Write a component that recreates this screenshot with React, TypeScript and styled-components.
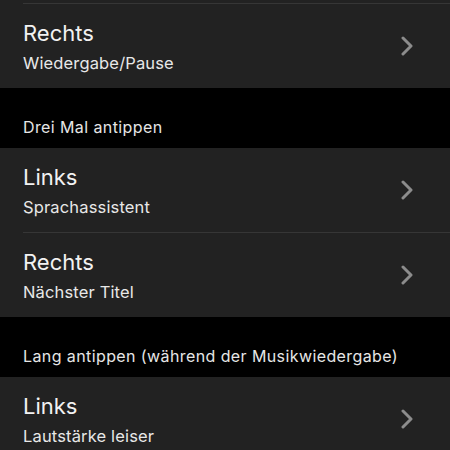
import React from "react";
import styled, { createGlobalStyle } from "styled-components";

const GlobalStyle = createGlobalStyle`
  html, body {
    margin: 0;
    padding: 0;
    background: #000;
  }
  body {
    font-family: Inter, "Noto Sans", "Liberation Sans", sans-serif;
    -webkit-font-smoothing: antialiased;
  }
`;

const Screen = styled.div`
  width: 450px;
  height: 450px;
  overflow: hidden;
  background: #000;
  display: flex;
  flex-direction: column;
`;

const SectionHeader = styled.div`
  height: 60px;
  flex-shrink: 0;
  box-sizing: border-box;
  display: flex;
  align-items: flex-end;
  padding: 0 0 11px 23px;
  font-size: 16px;
  line-height: 19px;
  color: #e6e6e6;
  letter-spacing: 0.4px;
`;

const Group = styled.div`
  background: #222222;
  display: flex;
  flex-direction: column;
  flex-shrink: 0;
`;

// bottom edge of the row scrolled out above the screen
const RowTail = styled.div`
  height: 3px;
`;

const Row = styled.div`
  height: 84px;
  box-sizing: border-box;
  display: flex;
  align-items: center;
  padding: 0 36px 0 23px;
`;

const Divider = styled.div`
  height: 1px;
  margin-left: 23px;
  background: #363636;
`;

const Texts = styled.div`
  flex: 1;
  display: flex;
  flex-direction: column;
  gap: 7px;
  align-self: flex-start;
  padding-top: 16px;
`;

const Title = styled.div`
  font-size: 22px;
  line-height: 26px;
  color: #f2f2f2;
`;

const Subtitle = styled.div`
  font-size: 16.5px;
  line-height: 20px;
  letter-spacing: 0.15px;
  color: #e8e8e8;
`;

const Chevron = () => (
  <svg width="14" height="20" viewBox="0 0 14 20" fill="none">
    <path d="M3 2 L11 10 L3 18" stroke="#8c8c8c" strokeWidth="3" strokeLinecap="round" strokeLinejoin="round" />
  </svg>
);

type Item = { title: string; value: string };

const ListRow = ({ title, value }: Item) => (
  <Row>
    <Texts>
      <Title>{title}</Title>
      <Subtitle>{value}</Subtitle>
    </Texts>
    <Chevron />
  </Row>
);

const sections: { header?: string; items: Item[] }[] = [
  {
    items: [{ title: "Rechts", value: "Wiedergabe/Pause" }],
  },
  {
    header: "Drei Mal antippen",
    items: [
      { title: "Links", value: "Sprachassistent" },
      { title: "Rechts", value: "Nächster Titel" },
    ],
  },
  {
    header: "Lang antippen (während der Musikwiedergabe)",
    items: [{ title: "Links", value: "Lautstärke leiser" }],
  },
];

export default function App() {
  return (
    <>
      <GlobalStyle />
      <Screen>
        {sections.map((s, i) => (
          <React.Fragment key={i}>
            {s.header && <SectionHeader>{s.header}</SectionHeader>}
            <Group>
              {i === 0 && (
                <>
                  <RowTail />
                  <Divider />
                </>
              )}
              {s.items.map((item, j) => (
                <React.Fragment key={j}>
                  {j > 0 && <Divider />}
                  <ListRow {...item} />
                </React.Fragment>
              ))}
            </Group>
          </React.Fragment>
        ))}
      </Screen>
    </>
  );
}
